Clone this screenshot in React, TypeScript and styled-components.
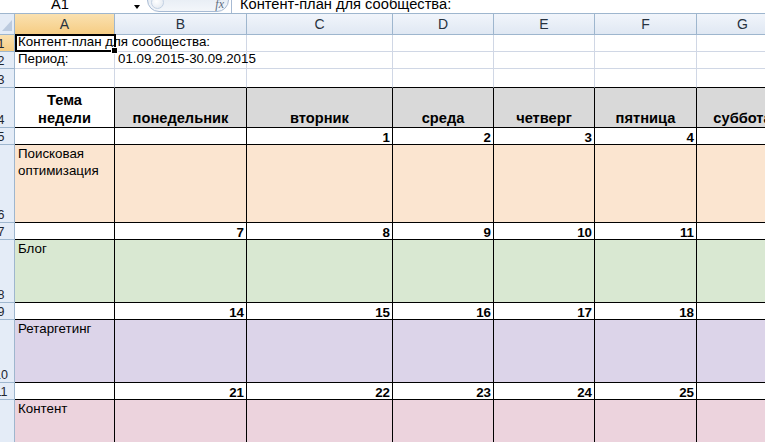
import { Fragment } from 'react';
import styled, { createGlobalStyle, css } from 'styled-components';

const GlobalStyle = createGlobalStyle`
  html, body {
    margin: 0;
    padding: 0;
    background: #fff;
    overflow: hidden;
  }
  body {
    font-family: "Liberation Sans", Arial, sans-serif;
    color: #000;
  }
`;

type Kind = 'plain' | 'head' | 'date' | 'topic';

type Row = {
  n: number;
  h: number;
  kind: Kind;
  fill?: string;
  values: string[];
};

const COLS = ['A', 'B', 'C', 'D', 'E', 'F', 'G'];
const COL_W = [100, 132, 146, 101, 101, 102, 92];

const PEACH = '#fbe5d0';
const GREEN = '#d9e8d2';
const LILAC = '#dcd4e9';
const PINK = '#ecd3dd';

const week = (start: number) => ['', ...Array.from({ length: 6 }, (_, i) => String(start + i))];

const ROWS: Row[] = [
  { n: 1, h: 17, kind: 'plain', values: ['Контент-план для сообщества:'] },
  { n: 2, h: 17, kind: 'plain', values: ['Период:', '01.09.2015-30.09.2015'] },
  { n: 3, h: 19, kind: 'plain', values: [] },
  {
    n: 4,
    h: 40,
    kind: 'head',
    values: ['Тема\nнедели', 'понедельник', 'вторник', 'среда', 'четверг', 'пятница', 'суббота'],
  },
  { n: 5, h: 17, kind: 'date', values: ['', '', '1', '2', '3', '4', '5'] },
  { n: 6, h: 78, kind: 'topic', fill: PEACH, values: ['Поисковая оптимизация'] },
  { n: 7, h: 17, kind: 'date', values: week(7) },
  { n: 8, h: 63, kind: 'topic', fill: GREEN, values: ['Блог'] },
  { n: 9, h: 17, kind: 'date', values: week(14) },
  { n: 10, h: 63, kind: 'topic', fill: LILAC, values: ['Ретаргетинг'] },
  { n: 11, h: 17, kind: 'date', values: week(21) },
  { n: 12, h: 63, kind: 'topic', fill: PINK, values: ['Контент'] },
];

const cellFill = (row: Row, col: number) => {
  if (row.kind === 'head') return col === 0 ? '#fff' : '#d9d9d9';
  if (row.kind === 'date') return '#fff';
  return row.fill ?? 'transparent';
};

const Screen = styled.div`
  width: 765px;
  height: 442px;
  overflow: hidden;
  background: #fff;
  display: flex;
  flex-direction: column;
`;

const FormulaBar = styled.div`
  flex: none;
  height: 13px;
  display: flex;
  align-items: flex-end;
  overflow: hidden;
  border-bottom: 1px solid #9eb6ce;
  font-size: 14.67px;
`;

const NameBox = styled.div`
  align-self: flex-start;
  width: 120px;
  text-align: center;
  line-height: 8px;
`;

const DropArrow = styled.div`
  align-self: flex-start;
  margin: 5px 0 0 14px;
  width: 0;
  height: 0;
  border-left: 3.5px solid transparent;
  border-right: 3.5px solid transparent;
  border-top: 4px solid #000;
`;

const FxPill = styled.div`
  flex: none;
  margin: 0 0 1px 7px;
  width: 82px;
  height: 24px;
  box-sizing: border-box;
  border: 1px solid #a7bad3;
  border-radius: 12px;
  background: linear-gradient(to bottom, #dfe7f1, #f3f6fa);
  display: flex;
  align-items: flex-end;
  padding: 0 4px 1px 3px;
`;

const Knob = styled.div`
  width: 11px;
  height: 11px;
  margin-bottom: 1px;
  border-radius: 50%;
  border: 1px solid #c2d0e2;
  background: radial-gradient(circle at 40% 40%, #ffffff, #dfe6ef);
`;

const Fx = styled.span`
  margin-left: auto;
  font-family: "Liberation Serif", "Times New Roman", serif;
  font-style: italic;
  font-size: 12px;
  line-height: 11px;
  color: #5d6c80;
`;

const FormulaInput = styled.div`
  align-self: stretch;
  flex: 1;
  margin-left: 2px;
  border-left: 1px solid #a7bad3;
  padding-left: 8px;
  line-height: 8px;
  white-space: nowrap;
`;

const Sheet = styled.div`
  display: grid;
  grid-template-columns: 15px ${COL_W.map((w) => `${w}px`).join(' ')};
  grid-template-rows: 21px ${ROWS.map((r) => `${r.h}px`).join(' ')};
  width: max-content;
`;

const headerLine = '#9eb6ce';
const activeHeader = css`
  background: linear-gradient(to bottom, #fae1b0, #f6cd84);
`;

const Corner = styled.div`
  position: relative;
  box-sizing: border-box;
  background: #e4ecf7;
  border-right: 1px solid ${headerLine};
  border-bottom: 1px solid ${headerLine};

  &::after {
    content: '';
    position: absolute;
    right: 2px;
    bottom: 3px;
    width: 0;
    height: 0;
    border-left: 10px solid transparent;
    border-bottom: 11px solid #bccbdf;
  }
`;

const ColHeader = styled.div<{ $active: boolean }>`
  box-sizing: border-box;
  display: flex;
  align-items: center;
  justify-content: center;
  background: linear-gradient(to bottom, #f1f5fb, #e0e8f3);
  border-right: 1px solid ${headerLine};
  border-bottom: 1px solid ${headerLine};
  font-size: 14px;
  color: #27323f;
  ${(p) => p.$active && activeHeader}
`;

const RowHeader = styled.div<{ $active: boolean }>`
  box-sizing: border-box;
  display: flex;
  align-items: flex-end;
  overflow: hidden;
  background: #e4ecf7;
  border-right: 1px solid ${headerLine};
  border-bottom: 1px solid ${headerLine};
  ${(p) => p.$active && activeHeader}
`;

const RowNumber = styled.span`
  flex: none;
  margin-left: -13px;
  width: 28px;
  text-align: center;
  font-size: 12.5px;
  line-height: 14px;
  color: #1e2530;
`;

const kinds = {
  plain: css`
    align-items: flex-end;
    padding: 0 3px 1px;
    font-size: 13.33px;
    line-height: 16px;
  `,
  head: css`
    align-items: flex-end;
    justify-content: center;
    text-align: center;
    white-space: pre-line;
    font-weight: bold;
    font-size: 14.67px;
    line-height: 18px;
  `,
  date: css`
    align-items: flex-end;
    justify-content: flex-end;
    padding-right: 2px;
    font-weight: bold;
    font-size: 13.33px;
    line-height: 12px;
  `,
  topic: css`
    align-items: flex-start;
    padding-left: 3px;
    white-space: normal;
    font-size: 13.33px;
    line-height: 17px;
  `,
};

const selection = css`
  &::after {
    content: '';
    position: absolute;
    left: 0;
    top: -1px;
    right: -2px;
    bottom: -1px;
    border: 2px solid #000;
    z-index: 2;
  }
  &::before {
    content: '';
    position: absolute;
    right: -4px;
    bottom: -3px;
    width: 5px;
    height: 5px;
    background: #000;
    border: 1px solid #fff;
    z-index: 3;
  }
`;

const Cell = styled.div<{ $kind: Kind; $fill: string; $box: boolean; $lid: boolean; $active: boolean }>`
  position: relative;
  box-sizing: border-box;
  display: flex;
  min-width: 0;
  white-space: nowrap;
  background: ${(p) => p.$fill};
  border-right: 1px solid ${(p) => (p.$box ? '#000' : '#d0d7e5')};
  border-bottom: 1px solid ${(p) => (p.$box || p.$lid ? '#000' : '#d0d7e5')};
  ${(p) => kinds[p.$kind]}
  ${(p) => p.$active && selection}
`;

const App = () => (
  <Screen>
    <GlobalStyle />
    <FormulaBar>
      <NameBox>A1</NameBox>
      <DropArrow />
      <FxPill>
        <Knob />
        <Fx>fx</Fx>
      </FxPill>
      <FormulaInput>Контент-план для сообщества:</FormulaInput>
    </FormulaBar>
    <Sheet>
      <Corner />
      {COLS.map((c, i) => (
        <ColHeader key={c} $active={i === 0}>
          {c}
        </ColHeader>
      ))}
      {ROWS.map((row) => (
        <Fragment key={row.n}>
          <RowHeader $active={row.n === 1}>
            <RowNumber>{row.n}</RowNumber>
          </RowHeader>
          {COLS.map((c, i) => (
            <Cell
              key={c}
              $kind={row.kind}
              $fill={cellFill(row, i)}
              $box={row.n >= 4}
              $lid={row.n === 3}
              $active={row.n === 1 && i === 0}
            >
              {row.values[i] ?? ''}
            </Cell>
          ))}
        </Fragment>
      ))}
    </Sheet>
  </Screen>
);

export default App;
